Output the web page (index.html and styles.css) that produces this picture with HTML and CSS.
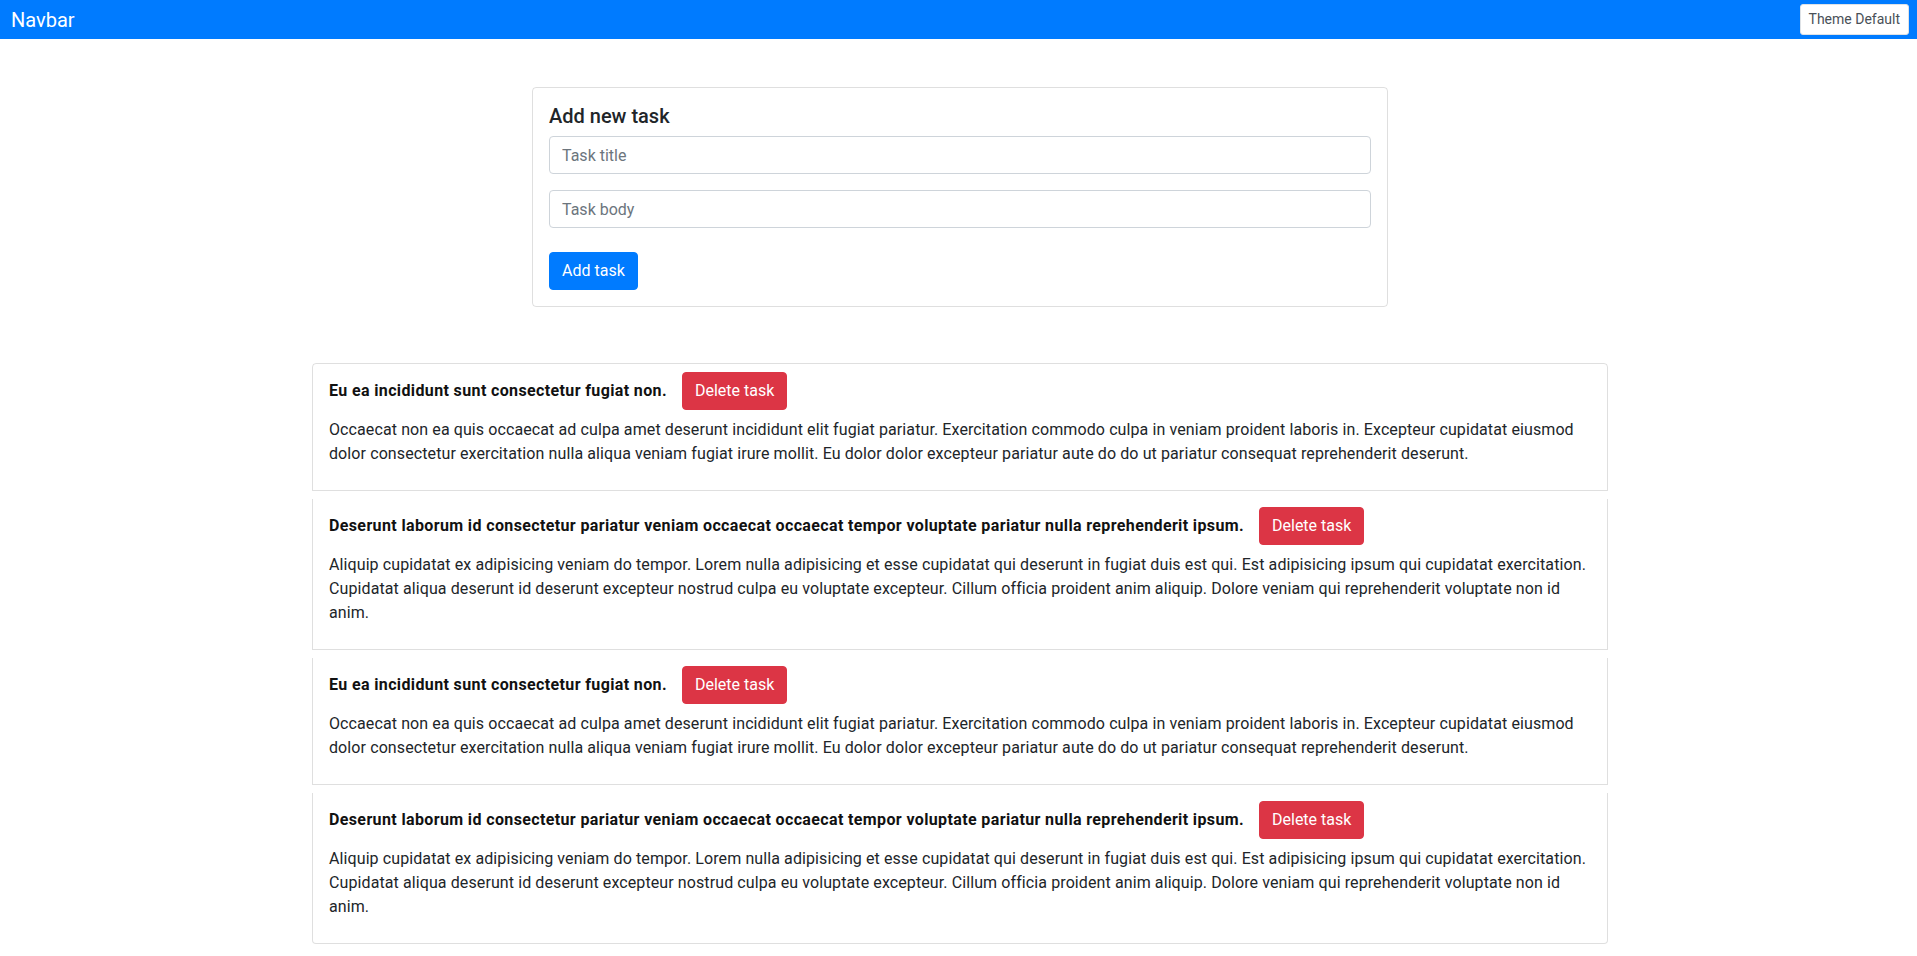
FILE: index.html
```html
<!DOCTYPE html>
<html lang="en">
<head>
<meta charset="utf-8">
<title>Tasks</title>
<link rel="stylesheet" href="styles.css">
</head>
<body>
<nav class="navbar">
  <span class="brand">Navbar</span>
  <button class="theme-btn" type="button">Theme Default</button>
</nav>
<main class="page">
  <section class="form-card">
    <h5 class="form-title">Add new task</h5>
    <input class="field" type="text" placeholder="Task title">
    <input class="field field-last" type="text" placeholder="Task body">
    <button class="btn btn-primary" type="button">Add task</button>
  </section>
  <ul class="task-list">
    <li class="task">
      <div class="task-head">
        <span class="task-title">Eu ea incididunt sunt consectetur fugiat non.</span>
        <button class="btn btn-danger" type="button">Delete task</button>
      </div>
      <p class="task-body">Occaecat non ea quis occaecat ad culpa amet deserunt incididunt elit fugiat pariatur. Exercitation commodo culpa in veniam proident laboris in. Excepteur cupidatat eiusmod dolor consectetur exercitation nulla aliqua veniam fugiat irure mollit. Eu dolor dolor excepteur pariatur aute do do ut pariatur consequat reprehenderit deserunt.</p>
    </li>
    <li class="task">
      <div class="task-head">
        <span class="task-title">Deserunt laborum id consectetur pariatur veniam occaecat occaecat tempor voluptate pariatur nulla reprehenderit ipsum.</span>
        <button class="btn btn-danger" type="button">Delete task</button>
      </div>
      <p class="task-body">Aliquip cupidatat ex adipisicing veniam do tempor. Lorem nulla adipisicing et esse cupidatat qui deserunt in fugiat duis est qui. Est adipisicing ipsum qui cupidatat exercitation. Cupidatat aliqua deserunt id deserunt excepteur nostrud culpa eu voluptate excepteur. Cillum officia proident anim aliquip. Dolore veniam qui reprehenderit voluptate non id anim.</p>
    </li>
    <li class="task">
      <div class="task-head">
        <span class="task-title">Eu ea incididunt sunt consectetur fugiat non.</span>
        <button class="btn btn-danger" type="button">Delete task</button>
      </div>
      <p class="task-body">Occaecat non ea quis occaecat ad culpa amet deserunt incididunt elit fugiat pariatur. Exercitation commodo culpa in veniam proident laboris in. Excepteur cupidatat eiusmod dolor consectetur exercitation nulla aliqua veniam fugiat irure mollit. Eu dolor dolor excepteur pariatur aute do do ut pariatur consequat reprehenderit deserunt.</p>
    </li>
    <li class="task">
      <div class="task-head">
        <span class="task-title">Deserunt laborum id consectetur pariatur veniam occaecat occaecat tempor voluptate pariatur nulla reprehenderit ipsum.</span>
        <button class="btn btn-danger" type="button">Delete task</button>
      </div>
      <p class="task-body">Aliquip cupidatat ex adipisicing veniam do tempor. Lorem nulla adipisicing et esse cupidatat qui deserunt in fugiat duis est qui. Est adipisicing ipsum qui cupidatat exercitation. Cupidatat aliqua deserunt id deserunt excepteur nostrud culpa eu voluptate excepteur. Cillum officia proident anim aliquip. Dolore veniam qui reprehenderit voluptate non id anim.</p>
    </li>
  </ul>
</main>
</body>
</html>
```

FILE: styles.css
```css
* { box-sizing: border-box; }

html, body {
  margin: 0;
  padding: 0;
  background: #fff;
  color: #212529;
  font-family: Roboto, "Liberation Sans", sans-serif;
  font-size: 16px;
  line-height: 1.5;
}

.navbar {
  height: 39px;
  background: #007bff;
  display: flex;
  align-items: center;
  justify-content: space-between;
  padding: 0 8px 0 11px;
}

.brand {
  color: #fff;
  font-size: 20px;
  line-height: 30px;
}

.theme-btn {
  height: 31px;
  padding: 0 8px;
  background: #fff;
  border: 1px solid #dee2e6;
  border-radius: 3px;
  color: #495057;
  font-family: inherit;
  font-size: 14px;
  line-height: 1.5;
}

.page {
  padding-left: 3px;
  padding-bottom: 12px;
}

.form-card {
  width: 856px;
  margin: 48px auto 0;
  padding: 16px;
  border: 1px solid rgba(0, 0, 0, 0.125);
  border-radius: 4px;
  display: flex;
  flex-direction: column;
  align-items: flex-start;
}

.form-title {
  margin: 0 0 8px;
  font-size: 20px;
  font-weight: 500;
  line-height: 24px;
}

.field {
  display: block;
  width: 100%;
  height: 38px;
  margin: 0 0 16px;
  padding: 6px 12px;
  border: 1px solid #ced4da;
  border-radius: 4px;
  font-family: inherit;
  font-size: 16px;
  line-height: 1.5;
  color: #495057;
}

.field::placeholder { color: #6c757d; }

.field-last { margin-bottom: 24px; }

.btn {
  height: 38px;
  padding: 6px 12px;
  border: 1px solid transparent;
  border-radius: 4px;
  color: #fff;
  font-family: inherit;
  font-size: 16px;
  line-height: 24px;
  white-space: nowrap;
}

.btn-primary { background: #007bff; border-color: #007bff; }
.btn-danger { background: #dc3545; border-color: #dc3545; flex-shrink: 0; }

.task-list {
  list-style: none;
  width: 1296px;
  margin: 56px auto 0;
  padding: 0;
}

.task {
  padding: 8px 16px;
  margin-bottom: 8px;
  border: 1px solid rgba(0, 0, 0, 0.125);
}

.task + .task { border-top-width: 0; }
.task:first-child { border-radius: 4px 4px 0 0; }
.task:last-child { border-radius: 0 0 4px 4px; }

.task-head {
  display: flex;
  align-items: center;
  gap: 15px;
}

.task-title {
  font-weight: 700;
  font-size: 16px;
  letter-spacing: 0.37px;
  color: #111;
}

.task-body {
  margin: 8px 0 16px;
  line-height: 24px;
  letter-spacing: 0.1px;
}
```
